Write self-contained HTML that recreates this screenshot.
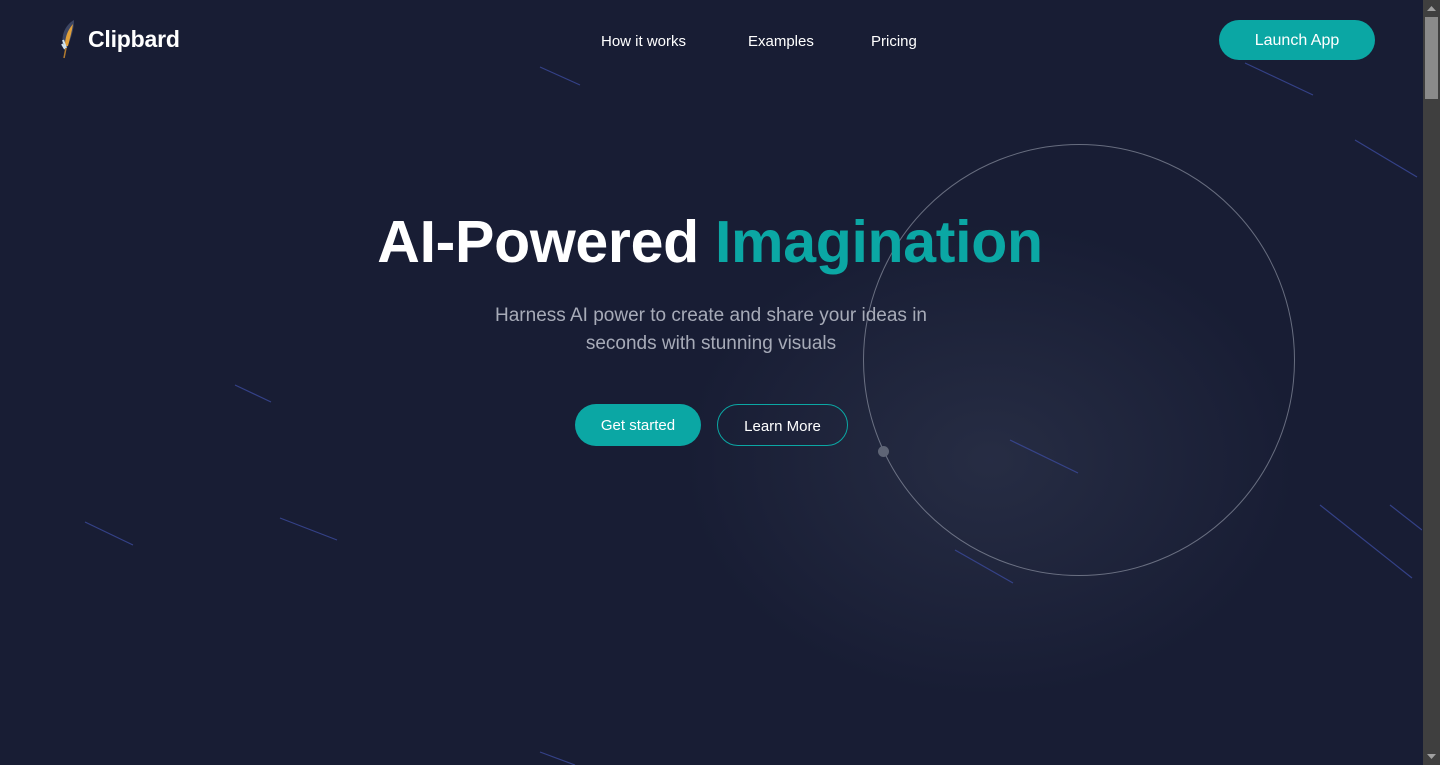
<!DOCTYPE html>
<html><head><meta charset="utf-8"><style>
*{margin:0;padding:0;box-sizing:border-box}
html,body{width:1440px;height:765px;overflow:hidden}
body{background:#181d34;font-family:"Liberation Sans",sans-serif;color:#fff;position:relative}
.glow{position:absolute;left:680px;top:220px;width:620px;height:480px;border-radius:50%;background:radial-gradient(ellipse at center,rgba(48,55,78,.6),rgba(24,29,52,0) 70%)}
.logo{position:absolute;left:58px;top:18px;display:flex;align-items:center}
.logo span{font-weight:bold;font-size:23px;margin-left:8px;letter-spacing:-.2px}
nav a{position:absolute;top:33px;font-size:15px;color:#fff;text-decoration:none}
.launch{position:absolute;left:1219px;top:20px;width:156px;height:40px;border-radius:20px;background:#0ba7a4;font-size:16px;display:flex;align-items:center;justify-content:center;padding-top:2px}
h1{position:absolute;left:0;width:1422px;top:208px;text-align:center;font-size:59px;font-weight:bold;letter-spacing:-.3px;margin-left:-1px}
h1 b{color:#0ba7a4}
p{position:absolute;left:0;width:1422px;top:302px;text-align:center;font-size:19px;line-height:28px;color:#a7abb8}
.b1{position:absolute;left:575px;top:404px;width:126px;height:42px;border-radius:21px;background:#0ba7a4;font-size:15px;display:flex;align-items:center;justify-content:center}
.b2{position:absolute;left:717px;top:404px;width:131px;height:42px;border-radius:21px;border:1px solid #0ba7a4;font-size:15px;display:flex;align-items:center;justify-content:center;padding-top:2px}
.circle{position:absolute;left:863px;top:144px;width:432px;height:432px;border-radius:50%;border:1px solid rgba(170,175,190,.55)}
.dot{position:absolute;left:878px;top:446px;width:11px;height:11px;border-radius:50%;background:#5e6475}
.sb{position:absolute;left:1423px;top:0;width:17px;height:765px;background:#3f3f3f}
.th{position:absolute;left:1425px;top:17px;width:13px;height:82px;background:#8a8a8a}
</style></head><body>
<div class="glow"></div>
<svg width="1422" height="765" style="position:absolute;left:0;top:0">
<g stroke="#3b4a9c" stroke-width="1.2" opacity=".8">
<line x1="540" y1="67" x2="580" y2="85"/>
<line x1="1245" y1="63" x2="1313" y2="95"/>
<line x1="1355" y1="140" x2="1417" y2="177"/>
<line x1="235" y1="385" x2="271" y2="402"/>
<line x1="85" y1="522" x2="133" y2="545"/>
<line x1="280" y1="518" x2="337" y2="540"/>
<line x1="1010" y1="440" x2="1078" y2="473"/>
<line x1="955" y1="550" x2="1013" y2="583"/>
<line x1="1320" y1="505" x2="1412" y2="578"/>
<line x1="1390" y1="505" x2="1422" y2="530"/>
<line x1="540" y1="752" x2="575" y2="765"/>
</g></svg>
<div class="logo"><svg width="22" height="42" viewBox="0 0 22 42">
<path d="M16 2 C6 8 3 18 5 30 L9 30 C13 20 16 12 16 2Z" fill="#3d4663"/>
<path d="M15 6 C9 13 7 20 7 28 L10 28 C12 20 14 13 15 6Z" fill="#e0a03a"/>
<path d="M5 22 L8 30 M4 26 L7 31" stroke="#cfe3ee" stroke-width="2"/>
<line x1="8" y1="30" x2="6" y2="40" stroke="#b07a30" stroke-width="1.5"/>
</svg><span>Clipbard</span></div>
<nav><a style="left:601px">How it works</a><a style="left:748px">Examples</a><a style="left:871px">Pricing</a></nav>
<div class="launch">Launch App</div>
<div class="circle"></div><div class="dot"></div>
<h1>AI-Powered <b>Imagination</b></h1>
<p>Harness AI power to create and share your ideas in<br>seconds with stunning visuals</p>
<div class="b1">Get started</div><div class="b2">Learn More</div>
<div class="sb"></div><div class="th"></div>
<svg style="position:absolute;left:1426px;top:5px" width="11" height="7"><path d="M1 6 L5.5 1 L10 6Z" fill="#a0a0a0"/></svg>
<svg style="position:absolute;left:1426px;top:753px" width="11" height="7"><path d="M1 1 L5.5 6 L10 1Z" fill="#a0a0a0"/></svg>
</body></html>
